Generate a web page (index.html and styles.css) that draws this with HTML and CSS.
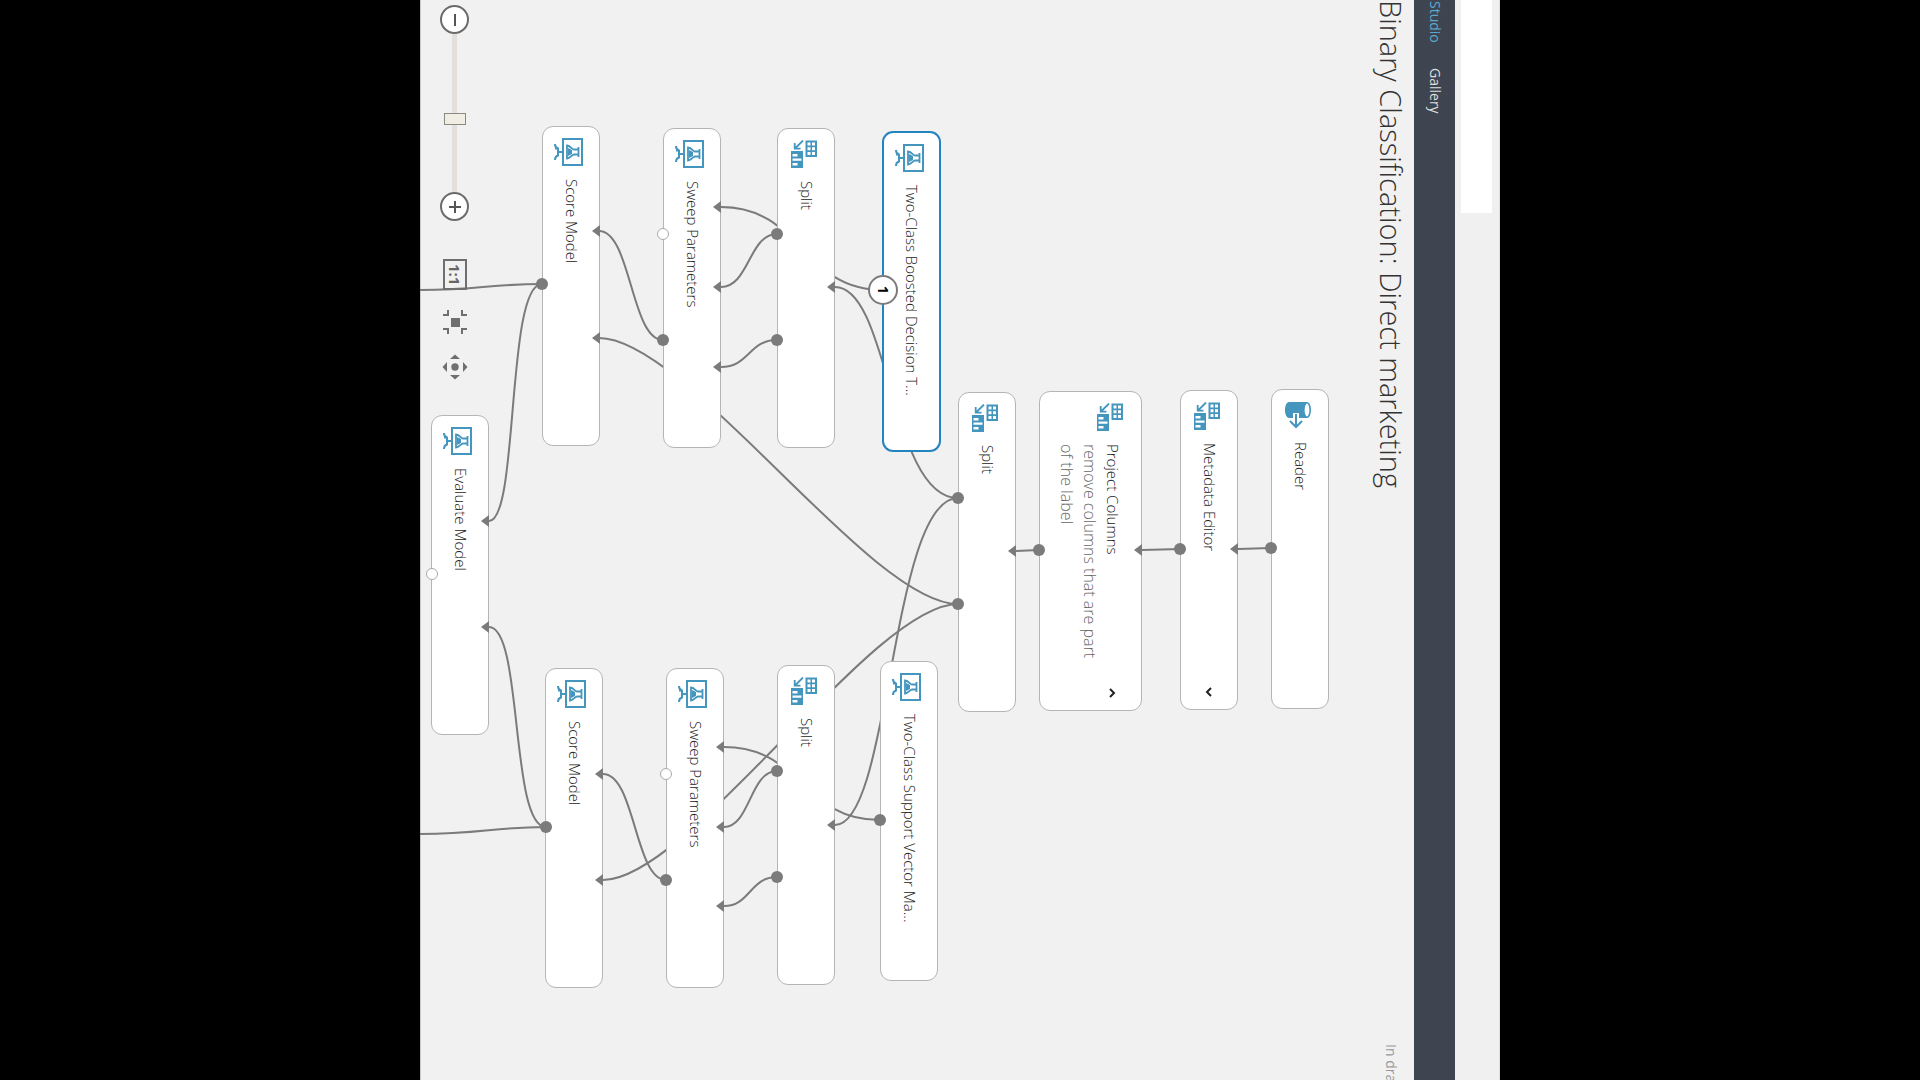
FILE: index.html
```html
<!DOCTYPE html>
<html lang="en">
<head>
<meta charset="utf-8">
<title>Binary Classification: Direct marketing</title>
<link rel="stylesheet" href="styles.css">
</head>
<body>
<svg class="defs" aria-hidden="true">
  <symbol id="i-model" viewBox="0 0 29 28">
    <path d="M9 1H28V27H9ZM1 6C1 9 2 10 4 10.500V17.500C2 18 1 19 1 22M1 10.500H4M4 14H9" fill="none" stroke="#4596be" stroke-width="2"/>
    <path d="M24.500 9V19M24 11.500H20C18 11.500 17 8 13 7.500V20.500C17 20 18 16.500 20 16.500H24" fill="none" stroke="#4596be" stroke-width="1.800"/>
    <path d="M14 10L18 12V16L14 18Z" fill="#4596be"/>
  </symbol>
  <symbol id="i-data" viewBox="0 0 26 28">
    <path fill="#4596be" fill-rule="evenodd" d="M14.500.5H26V17H14.500ZM16.500 2.500V5.500H19.500V2.500ZM21 2.500V5.500H24V2.500ZM16.500 7.200V10.200H19.500V7.200ZM21 7.200V10.200H24V7.200ZM16.500 12V15H19.500V12ZM21 12V15H24V12ZM0 11H12V28H0ZM1.500 14V16.500H6.500V14ZM1.500 18.500V20.700H10.500V18.500ZM1.500 23V25.500H6.500V23Z"/>
    <path d="M12 .5L4 8.500M3.700 3V8.700H9.500" fill="none" stroke="#4596be" stroke-width="1.800"/>
  </symbol>
  <symbol id="i-reader" viewBox="0 0 26 28">
    <path d="M4 1H22V17H14V12H8V17H4C1.500 17 0 13 0 9S1.500 1 4 1Z" fill="#4596be"/>
    <ellipse cx="22" cy="9" rx="3.200" ry="7.200" fill="#fff" stroke="#4596be" stroke-width="1.600"/>
    <path d="M11 13V26M5 20L11 26L17 20" fill="none" stroke="#4596be" stroke-width="2"/>
  </symbol>
</svg>
<div class="stage">
  <div class="tabs"><div class="tab"></div></div>
  <nav class="nav"><a class="current" href="#studio">Studio</a><a href="#gallery">Gallery</a></nav>
  <header class="head"><h1>Binary Classification: Direct marketing</h1><span class="status">In draft</span></header>
  <main class="canvas">
    <svg class="layer" width="940" height="1080">
      <g class="wire">
        <path d="M851 548L818 549M760 549L722 550M619 550L596 551"/>
        <path d="M538 498C470 498 470 287 415 287M538 498C471 498 471 825 415 825"/>
        <path d="M538 604C450 604 267 338 179 338M538 604C452 604 269 880 183 880"/>
        <path d="M463 290C382 290 382 207 301 207M460 820C382 820 382 747 304 747"/>
        <path d="M357 234C329 234 329 287 301 287M357 340C329 340 329 367 301 367"/>
        <path d="M357 771C330 771 330 827 304 827M357 877C330 877 330 906 304 906"/>
        <path d="M243 340C211 340 211 231 179 231M246 880C215 880 215 774 183 774"/>
        <path d="M122 284C86 284 99 521 69 521M126 827C90 827 103 627 69 627"/>
        <path d="M122 284C70 284 60 290 0 290M126 827C75 827 60 834 0 834"/>
      </g>
    </svg>

    <section class="node" style="left:851px;top:389px"><svg class="icon"><use href="#i-reader"/></svg><h2>Reader</h2></section>
    <section class="node" style="left:760px;top:390px"><svg class="icon"><use href="#i-data"/></svg><h2>Metadata Editor</h2>
      <button class="toggle" aria-label="Expand"><svg width="8" height="12"><path d="M6 2L2 6L6 10"/></svg></button></section>
    <section class="node tall" style="left:619px;top:391px"><svg class="icon"><use href="#i-data"/></svg><div class="text"><h2>Project Columns</h2><p>remove columns that are part of the label</p></div>
      <button class="toggle" aria-label="Collapse"><svg width="8" height="12"><path d="M2 2L6 6L2 10"/></svg></button></section>
    <section class="node" style="left:538px;top:392px"><svg class="icon"><use href="#i-data"/></svg><h2>Split</h2></section>
    <section class="node selected" style="left:462px;top:131px"><svg class="icon wide"><use href="#i-model"/></svg><h2>Two-Class Boosted Decision T...</h2></section>
    <section class="node" style="left:357px;top:128px"><svg class="icon"><use href="#i-data"/></svg><h2>Split</h2></section>
    <section class="node" style="left:243px;top:128px"><svg class="icon wide"><use href="#i-model"/></svg><h2>Sweep Parameters</h2></section>
    <section class="node" style="left:122px;top:126px"><svg class="icon wide"><use href="#i-model"/></svg><h2>Score Model</h2></section>
    <section class="node" style="left:460px;top:661px"><svg class="icon wide"><use href="#i-model"/></svg><h2>Two-Class Support Vector Ma...</h2></section>
    <section class="node" style="left:357px;top:665px"><svg class="icon"><use href="#i-data"/></svg><h2>Split</h2></section>
    <section class="node" style="left:246px;top:668px"><svg class="icon wide"><use href="#i-model"/></svg><h2>Sweep Parameters</h2></section>
    <section class="node" style="left:125px;top:668px"><svg class="icon wide"><use href="#i-model"/></svg><h2>Score Model</h2></section>
    <section class="node" style="left:11px;top:415px"><svg class="icon wide"><use href="#i-model"/></svg><h2>Evaluate Model</h2></section>

    <svg class="layer" width="940" height="1080">
      <g class="port">
        <circle cx="851" cy="548" r="6"/><circle cx="760" cy="549" r="6"/><circle cx="619" cy="550" r="6"/>
        <circle cx="538" cy="498" r="6"/><circle cx="538" cy="604" r="6"/><circle cx="460" cy="820" r="6"/>
        <circle cx="357" cy="234" r="6"/><circle cx="357" cy="340" r="6"/><circle cx="357" cy="771" r="6"/><circle cx="357" cy="877" r="6"/>
        <circle cx="243" cy="340" r="6"/><circle cx="246" cy="880" r="6"/><circle cx="122" cy="284" r="6"/><circle cx="126" cy="827" r="6"/>
        <path d="M818 543v12l-8-6zM722 544v12l-8-6zM596 545v12l-8-6zM415 281v12l-8-6zM415 819v12l-8-6z"/>
        <path d="M301 201v12l-8-6zM301 281v12l-8-6zM301 361v12l-8-6zM304 741v12l-8-6zM304 821v12l-8-6zM304 900v12l-8-6z"/>
        <path d="M180 225v12l-8-6zM180 332v12l-8-6zM183 768v12l-8-6zM183 874v12l-8-6zM69 515v12l-8-6zM69 621v12l-8-6z"/>
      </g>
      <g class="open">
        <circle cx="243" cy="234" r="5.500"/><circle cx="246" cy="774" r="5.500"/><circle cx="12" cy="574" r="5.500"/>
      </g>
    </svg>
    <span class="badge">1</span>

    <div class="tools">
      <button class="round" aria-label="Zoom out"><svg width="12" height="12"><path d="M6 0V12"/></svg></button>
      <input class="zoom" type="range" min="0" max="100" value="54" aria-label="Zoom">
      <button class="round" aria-label="Zoom in"><svg width="12" height="12"><path d="M6 0V12M0 6H12"/></svg></button>
      <button class="actual">1:1</button>
      <button class="plain fit" aria-label="Fit to screen"><svg width="26" height="26"><path class="line" d="M6 1V6H1M20 1V6H25M6 25V20H1M20 25V20H25"/><path d="M9 9H18V18H9Z"/></svg></button>
      <button class="plain" aria-label="Pan"><svg width="26" height="26"><circle cx="13" cy="13" r="3.700"/><path d="M13 .5L18 5H8ZM13 25.500L18 21H8ZM.5 13L5 8V18ZM25.500 13L21 8V18Z"/></svg></button>
    </div>
  </main>
</div>
</body>
</html>
```
FILE: styles.css
```css
* { box-sizing: border-box; }
body {
  margin: 0;
  background: #000;
  font-family: "Open Sans", "Noto Sans", sans-serif;
  color: #222;
  display: flex;
  justify-content: center;
}
h1, h2, p { margin: 0; font-weight: 300; }
button { padding: 0; border: 0; background: none; font: inherit; color: inherit; }
.defs { position: absolute; width: 0; height: 0; }

/* The whole workspace is turned a quarter clockwise. */
.stage {
  writing-mode: vertical-rl;
  display: flex;
  flex-direction: column;
  height: 100vh;
  aspect-ratio: 1;
  background: #f1f1f1;
  overflow: hidden;
}
.tabs {
  flex: none;
  width: 45px;
  padding: 0 7px;
  background: #f0f0f0;
  border-right: 1px solid #ddd;
}
.tab { width: 31px; height: 213px; background: #fff; }
.nav {
  flex: none;
  display: flex;
  align-items: center;
  gap: 25px;
  width: 41px;
  padding: 1px 0 0 2px;
  background: #3e4550;
  font-size: 14px;
}
.nav a { color: #ddd; text-decoration: none; }
.nav .current { color: #5aa9cf; }
.head {
  flex: none;
  display: flex;
  justify-content: space-between;
  align-items: center;
  width: 54px;
  padding-left: 8px;
  white-space: nowrap;
}
.head h1 { font-size: 29px; line-height: 40px; color: #333; }
.status { flex: none; height: 36px; font-size: 14px; color: #999; }

.canvas {
  position: relative;
  flex: 1;
  background: linear-gradient(#c8c8c8, #c8c8c8) left / 1px 100% no-repeat;
  overflow: hidden;
}
.layer { position: absolute; left: 0; top: 0; }
.wire { fill: none; stroke: #7b7b7b; stroke-width: 2; }
.port { fill: #7b7b7b; }
.open { fill: #fff; stroke: #aaa; stroke-width: 1; }

.node {
  position: absolute;
  display: flex;
  align-items: center;
  gap: 13px;
  width: 58px;
  height: 320px;
  padding: 11px 0;
  background: #fff;
  border: 1px solid #b5b5b5;
  border-radius: 11px;
}
.node h2 { font-size: 15px; line-height: 23px; white-space: nowrap; }
.node p { font-size: 16px; line-height: 23px; color: #666; }
.icon { flex: none; width: 26px; height: 28px; margin-right: 5px; }
.icon.wide { width: 29px; }
.selected { border: 2px solid #2484c0; width: 59px; height: 321px; }
.tall { width: 103px; align-items: flex-start; padding-right: 17px; }
.tall .icon { margin-right: 1px; }
.text { height: 220px; }
.toggle { margin-top: auto; line-height: 0; }
.tall .toggle { margin-right: 8px; }
.toggle path { fill: none; stroke: #222; stroke-width: 2; }

.badge {
  position: absolute;
  left: 448px;
  top: 275px;
  width: 30px;
  height: 30px;
  border: 2px solid #7b7b7b;
  border-radius: 50%;
  background: #fff;
  color: #000;
  font-size: 14px;
  font-weight: 700;
  line-height: 26px;
  text-align: center;
}
.tools {
  position: absolute;
  left: 20px;
  top: 5px;
  width: 29px;
  display: flex;
  align-items: center;
}
.round {
  width: 29px;
  height: 29px;
  border: 2px solid #6b6b6b;
  border-radius: 50%;
  background: #fff;
  display: flex;
  align-items: center;
  justify-content: center;
}
.round path { stroke: #555; stroke-width: 2; }
.zoom {
  appearance: none;
  width: 22px;
  height: 158px;
  margin: 0;
  background: linear-gradient(#e3dfdc, #e3dfdc) center / 5px 100% no-repeat;
}
.zoom::-webkit-slider-thumb {
  appearance: none;
  width: 22px;
  height: 12px;
  border: 1px solid #8a8a80;
  background: #efede4;
}
.actual {
  width: 24px;
  height: 31px;
  margin-top: 38px;
  border: 2px solid #6f6f6f;
  font-size: 15px;
  font-weight: 700;
  line-height: 20px;
  color: #666;
}
.plain { margin-top: 19px; line-height: 0; }
.plain svg { fill: #6f6f6f; display: block; }
.plain .line { fill: none; stroke: #6f6f6f; stroke-width: 2; }
```
